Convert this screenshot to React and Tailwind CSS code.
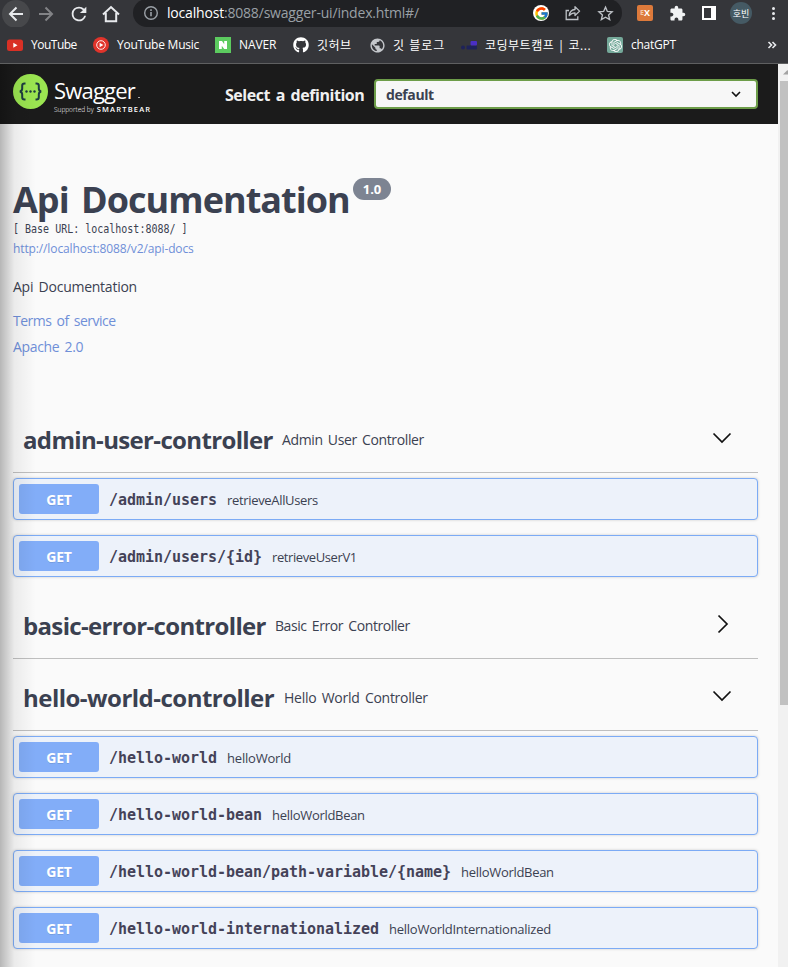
import React from "react";
import { FaGithub } from "react-icons/fa";
import { MdExtension, MdPublic } from "react-icons/md";
import { FcGoogle } from "react-icons/fc";
import { SiOpenai } from "react-icons/si";

const iconBox = "flex size-8 shrink-0 items-center justify-center";

function Stroke({ d, className = "size-5 text-[#e8eaed]", w = 2 }) {
  return (
    <svg viewBox="0 0 20 20" className={className} fill="none" stroke="currentColor" strokeWidth={w}>
      <path d={d} />
    </svg>
  );
}

function Toolbar() {
  return (
    <div className="flex h-[27px] items-center pl-[1px]">
      <div className="flex h-[27px] w-[29px] shrink-0 items-center justify-center overflow-hidden">
        <div className="flex size-7 shrink-0 items-center justify-center rounded-full bg-[#47484b]">
          <Stroke d="M17 10H4M10.5 3.5L4 10l6.500 6.500" />
        </div>
      </div>
      <div className="-ml-px flex h-8 w-[34px] shrink-0 items-center justify-center">
        <Stroke d="M3 10h13M9.500 3.500L16 10l-6.500 6.500" className="size-5 text-[#828386]" />
      </div>
      <div className={iconBox}>
        <svg viewBox="0 0 24 24" className="size-[22px] text-[#e8eaed]" fill="currentColor">
          <path d="M17.65 6.35A7.960 7.960 0 0 0 12 4a8 8 0 1 0 7.730 10h-2.080A6 6 0 1 1 12 6c1.660 0 3.140.69 4.220 1.780L13 11h7V4z" />
        </svg>
      </div>
      <div className={iconBox}>
        <Stroke d="M2 10.500L10 3l8 7.500M4.800 9v8.200h10.400V9" />
      </div>
      <div className="-mt-px ml-[6px] flex h-[28px] w-[489px] shrink-0 items-center rounded-full bg-[#202124]">
        <svg viewBox="0 0 16 16" className="ml-[10px] size-4 shrink-0 text-[#9aa0a6]" fill="none" stroke="currentColor" strokeWidth="1.400">
          <circle cx="8" cy="8" r="6.300" />
          <path d="M8 7v4.300M8 4.300v1.600" strokeWidth="1.600" />
        </svg>
        <span className="ml-2 w-[358px] whitespace-nowrap text-[14px] leading-5 tracking-[-0.19px] text-[#9aa0a6]">
          <span className="text-[#fff]">localhost</span>:8088/swagger-ui/index.html#/
        </span>
        <div className={iconBox}>
          <span className="flex size-4 items-center justify-center rounded-full bg-white">
            <FcGoogle className="size-[15px]" />
          </span>
        </div>
        <div className={iconBox}>
          <svg viewBox="0 0 16 16" className="size-4 text-[#bdc1c6]" fill="none" stroke="currentColor" strokeWidth="1.300">
            <path d="M4 5.500H1.200v9h11.600v-3.200" />
            <path d="M10 1.800v2.700C6.500 4.800 4.600 7 4.200 10.700 5.700 8.700 7.500 7.900 10 7.900v2.600l4.600-4.400z" strokeLinejoin="round" />
          </svg>
        </div>
        <div className={iconBox}>
          <Stroke w={1.6} d="M10 2.500l2.200 5.100 5.600.5-4.200 3.700 1.300 5.500L10 14.400l-4.900 2.900 1.300-5.500-4.200-3.700 5.600-.5z" className="size-[17px] text-[#bdc1c6]" />
        </div>
      </div>
      <div className={iconBox + " ml-[7px]"}>
        <span className="-mt-px flex size-4 items-center justify-center rounded-[2px] bg-[#dd7a3b] text-[9px] font-bold leading-4 text-white">
          <span className="text-[7px] text-[#f4c9a8]">E</span>X
        </span>
      </div>
      <div className={iconBox}>
        <MdExtension className="-mt-px size-[17px] text-[#f1f3f4]" />
      </div>
      <div className={iconBox}>
        <span className="-mt-px h-[14px] w-[14px] border-2 border-r-[5px] border-white" />
      </div>
      <div className={iconBox}>
        <span className="-mt-px flex size-[22px] items-center justify-center whitespace-nowrap rounded-full bg-[#455a64] text-[9px] leading-none text-white">호빈</span>
      </div>
      <div className={iconBox}>
        <span className="flex flex-col gap-[2px]">
          <i className="size-[3px] rounded-full bg-[#e8eaed]" />
          <i className="size-[3px] rounded-full bg-[#e8eaed]" />
          <i className="size-[3px] rounded-full bg-[#e8eaed]" />
        </span>
      </div>
    </div>
  );
}

function Bookmark({ label, width, children }) {
  return (
    <div className="mr-4 flex shrink-0 items-center gap-2">
      <span className="flex size-4 shrink-0 items-center justify-center">{children}</span>
      <span className={"whitespace-nowrap text-[12px] leading-4 text-white " + width}>{label}</span>
    </div>
  );
}

function Bookmarks() {
  return (
    <div className="flex h-9 items-center pl-[7px]">
      <Bookmark label="YouTube" width="w-[46px] tracking-[-0.5px]">
        <svg viewBox="0 0 16 16" className="size-4">
          <rect y="2.500" width="16" height="11.500" rx="2.500" fill="#d93025" />
          <path d="M6.300 5.800v5l4.200-2.500z" fill="#fff" />
        </svg>
      </Bookmark>
      <Bookmark label="YouTube Music" width="w-[82px] tracking-[-0.23px]">
        <svg viewBox="0 0 16 16" className="size-4">
          <circle cx="8" cy="8" r="8" fill="#e0342b" />
          <circle cx="8" cy="8" r="4.300" fill="none" stroke="#fff" strokeWidth="0.900" />
          <path d="M6.600 5.800v4.400L10.400 8z" fill="#fff" />
        </svg>
      </Bookmark>
      <Bookmark label="NAVER" width="w-[38px] tracking-[-0.1px]">
        <svg viewBox="0 0 16 16" className="size-4">
          <rect width="16" height="16" fill="#5ccb5f" />
          <path d="M4 4h3l2.200 3.300V4H12v8H9.200L6.800 8.700V12H4z" fill="#fff" />
        </svg>
      </Bookmark>
      <Bookmark label="깃허브" width="w-[36px] pt-px text-[12.5px] tracking-[0.5px]">
        <FaGithub className="size-4 text-white" />
      </Bookmark>
      <Bookmark label="깃 블로그" width="w-[52px] pt-px text-[12.5px] tracking-[1px]">
        <MdPublic className="size-[17px] shrink-0 text-[#c4c7cb]" />
      </Bookmark>
      <Bookmark label="코딩부트캠프 | 코..." width="w-[106px] pt-px text-[12.5px] tracking-[0.5px]">
        <svg viewBox="0 0 16 16" className="size-4">
          <circle cx="2" cy="10.500" r="2" fill="#1e2259" />
          <rect x="5.500" y="8.500" width="10.500" height="4" rx="1" fill="#1e2259" />
          <rect x="9.500" y="4" width="6.500" height="4.500" rx="1" fill="#4a2fc4" />
        </svg>
      </Bookmark>
      <Bookmark label="chatGPT" width="w-[45px] tracking-[-0.25px]">
        <span className="flex size-4 items-center justify-center rounded-[2px] bg-[#75a99a]">
          <SiOpenai className="size-[13px] text-white" />
        </span>
      </Bookmark>
      <svg viewBox="0 0 10 10" className="ml-[75px] size-[10px] text-[#e8eaed]" fill="none" stroke="currentColor" strokeWidth="1.600">
        <path d="M1.500 2l3 3-3 3M5.500 2l3 3-3 3" />
      </svg>
    </div>
  );
}

function TopBar() {
  return (
    <div className="flex h-[60px] shrink-0 items-center bg-[#1b1b1b] pl-[13px]">
      <div className="flex w-[212px] shrink-0">
        <svg viewBox="0 0 35 35" className="-mt-[1px] size-[35px] shrink-0">
          <circle cx="17.500" cy="17.500" r="17.500" fill="#9be551" />
          <g fill="none" stroke="#1d3b40" strokeWidth="2">
            <path d="M12.500 9.500h-1c-1.700 0-2.300.8-2.300 2.300v2.700c0 1.900-.7 2.700-2.400 3 1.700.3 2.400 1.100 2.400 3v2.700c0 1.500.6 2.300 2.300 2.300h1" />
            <path d="M22.500 9.500h1c1.700 0 2.300.8 2.300 2.300v2.700c0 1.900.7 2.700 2.400 3-1.700.3-2.400 1.100-2.400 3v2.700c0 1.500-.6 2.300-2.300 2.300h-1" />
          </g>
          <g fill="#1d3b40">
            <circle cx="13.500" cy="17.500" r="1.200" />
            <circle cx="17.500" cy="17.500" r="1.200" />
            <circle cx="21.500" cy="17.500" r="1.200" />
          </g>
        </svg>
        <div className="-mb-[2px] ml-[6px] flex flex-col whitespace-nowrap text-white">
          <span className="mt-[1px] flex h-[28px] items-end text-[22px] leading-[27px] tracking-[-0.8px]">
            Swagger<span className="mb-[6px] ml-[3px] h-px w-[2px] bg-[#aaa]" />
          </span>
          <span className="flex items-baseline gap-[3px] leading-[10px]">
            <span className="text-[6.500px] font-light tracking-[0px]">Supported by</span>
            <span className="text-[7.500px] font-semibold tracking-[1.2px]">SMARTBEAR</span>
          </span>
        </div>
      </div>
      <span className="w-[149px] shrink-0 whitespace-nowrap pt-[2px] text-[16px] font-bold leading-6 tracking-[-0.46px] text-[#f0f0f0] [word-spacing:2px]">
        Select a definition
      </span>
      <div className="flex h-[30px] w-[384px] items-center justify-between rounded-[4px] border-2 border-[#6d9d49] bg-[#f7f7f7] pl-[10px] pr-[14px]">
        <span className="pt-px text-[14px] font-bold leading-5 tracking-[-0.4px] text-[#3b4151]">default</span>
        <Stroke w={3.2} d="M2 6l8 8 8-8" className="mr-px h-[10px] w-[10px] text-[#111]" />
      </div>
    </div>
  );
}

function Info() {
  return (
    <div className="h-[277px] whitespace-nowrap pt-[54px] text-[#3b4151]">
      <div className="flex h-[44px] items-start">
        <h1 className="h-[44px] w-[340px] text-[36px] font-bold leading-[44px] tracking-[-0.97px] [word-spacing:4px]">Api Documentation</h1>
        <span className="flex h-[22px] w-[38px] items-center justify-center rounded-full bg-[#7d8492] pt-px text-[13px] font-bold text-white">1.0</span>
      </div>
      <pre className="h-[14px] origin-left scale-x-[0.833] font-['DejaVu_Sans_Mono',monospace] text-[12px] leading-[14px]">[ Base URL: localhost:8088/ ]</pre>
      <p className="mt-[4px] text-[12px] leading-[18px] tracking-[-0.12px] text-[#6f8fd8]">http://localhost:8088/v2/api-docs</p>
      <p className="mt-[19px] text-[14px] leading-5 tracking-[-0.25px] [word-spacing:2px]">Api Documentation</p>
      <p className="mt-[14px] text-[14px] leading-5 tracking-[-0.5px] text-[#6f8fd8] [word-spacing:2px]">Terms of service</p>
      <p className="mt-[6px] text-[14px] leading-5 tracking-[-0.35px] text-[#6f8fd8] [word-spacing:2px]">Apache 2.0</p>
    </div>
  );
}

function Operation({ path, name, nameClass = "" }) {
  return (
    <div className="flex h-[42px] items-center whitespace-nowrap rounded-[4px] border border-[#7cabf5] bg-[#edf2fa] px-[5px] shadow-[0_0_3px_rgba(0,0,0,0.19)]">
      <span className="flex h-[30px] w-[80px] items-center justify-center rounded-[3px] bg-[#82adf8] text-[14px] font-bold tracking-[-0.2px] text-white [text-shadow:0_1px_0_rgba(0,0,0,0.1)]">GET</span>
      <span className="ml-[10px] mr-[10px] pt-[2px] font-['DejaVu_Sans_Mono',monospace] text-[15px] font-bold leading-5 tracking-[-0.03px] text-[#444258]">{path}</span>
      <span className={"pt-[2px] text-[13px] leading-5 text-[#3b4151] " + nameClass}>{name}</span>
    </div>
  );
}

function Section({ title, titleWidth, description, descriptionClass, open, operations = [] }) {
  return (
    <section>
      <div className="flex h-[72px] items-center whitespace-nowrap border-b border-[#bfbfbf] pb-0 pl-[10px] pr-[26px] pt-[7px] text-[#3b4151]">
        <h2 className={"shrink-0 text-[24px] font-bold leading-8 " + titleWidth}>{title}</h2>
        <span className={"flex-1 text-[14px] leading-5 [word-spacing:2px] " + descriptionClass}>{description}</span>
        <Stroke
          w={1.7}
          d={open ? "M1.500 5.500L10 14l8.500-8.500" : "M6.500 1.500L15 10l-8.500 8.500"}
          className="-mt-[5px] size-5 text-[#111]"
        />
      </div>
      {operations.length > 0 && (
        <div className="flex flex-col gap-[15px] pb-[10px] pt-[5px]">
          {operations.map((op) => (
            <Operation key={op.path} {...op} />
          ))}
        </div>
      )}
    </section>
  );
}

const sections = [
  {
    title: "admin-user-controller",
    titleWidth: "w-[259px] tracking-[-0.65px]",
    description: "Admin User Controller",
    descriptionClass: "tracking-[-0.38px]",
    open: true,
    operations: [
      { path: "/admin/users", name: "retrieveAllUsers", nameClass: "tracking-[-0.33px]" },
      { path: "/admin/users/{id}", name: "retrieveUserV1", nameClass: "tracking-[-0.4px]" },
    ],
  },
  {
    title: "basic-error-controller",
    titleWidth: "w-[252px] tracking-[-0.66px]",
    description: "Basic Error Controller",
    descriptionClass: "tracking-[-0.42px]",
    open: false,
  },
  {
    title: "hello-world-controller",
    titleWidth: "w-[261px] tracking-[-0.52px]",
    description: "Hello World Controller",
    descriptionClass: "tracking-[-0.27px]",
    open: true,
    operations: [
      { path: "/hello-world", name: "helloWorld", nameClass: "tracking-[-0.2px]" },
      { path: "/hello-world-bean", name: "helloWorldBean", nameClass: "tracking-[-0.3px]" },
      { path: "/hello-world-bean/path-variable/{name}", name: "helloWorldBean", nameClass: "tracking-[-0.3px]" },
      { path: "/hello-world-internationalized", name: "helloWorldInternationalized", nameClass: "tracking-[-0.26px]" },
    ],
  },
];

export default function App() {
  return (
    <div className="flex h-[967px] w-[788px] flex-col overflow-hidden bg-[#fafafa] font-['Open_Sans','Noto_Sans_CJK_KR',sans-serif]">
      <header className="h-[64px] shrink-0 border-b border-[#5f6061] bg-[#35363a]">
        <Toolbar />
        <Bookmarks />
      </header>
      <div className="flex h-[903px]">
        <main className="relative flex w-[778px] flex-col overflow-hidden">
          <TopBar />
          <div className="pl-[13px] pr-[20px]">
            <Info />
            {sections.map((s) => (
              <Section key={s.title} {...s} />
            ))}
          </div>
          <div className="pointer-events-none absolute inset-y-0 left-0 w-9 bg-linear-to-r from-black/27 via-black/6 via-40% to-transparent" />
        </main>
        <aside className="flex w-[10px] flex-col items-end bg-[#f1f1f1]">
          <svg viewBox="0 0 8 17" className="h-[17px] w-2">
            <path d="M3 10.500L7.500 6 12 10.500z" fill="#a3a3a3" />
          </svg>
          <div className="h-[624px] w-2 bg-[#c1c1c1]" />
        </aside>
      </div>
    </div>
  );
}
